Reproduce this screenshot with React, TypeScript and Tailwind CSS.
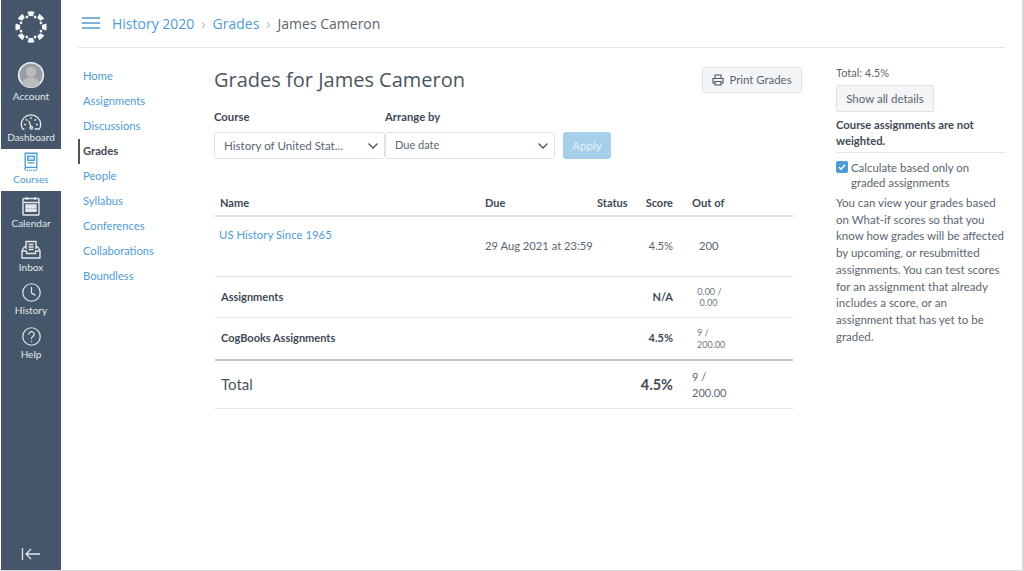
import React from "react";

const Icon = ({ children, w = 24, h = 24 }: { children: React.ReactNode; w?: number; h?: number }) => (
  <svg width={w} height={h} viewBox="0 0 24 24" fill="none" stroke="currentColor" strokeWidth="1.4" strokeLinecap="round" strokeLinejoin="round">
    {children}
  </svg>
);

const Logo = () => {
  const big = [0, 45, 90, 135, 180, 225, 270, 315];
  return (
    <svg width="32" height="32" viewBox="-16 -16 32 32" fill="#f4f5f6">
      {big.map((a) => (
        <g key={a} transform={`rotate(${a})`}>
          <path d="M-3.6 -15.300 Q0 -16 3.600 -15.300 L2 -10.800 Q0 -11.300 -2 -10.800 Z" />
          <circle cx="0" cy="-10.800" r="1.350" transform="rotate(22.5)" />
        </g>
      ))}
    </svg>
  );
};

const Avatar = () => (
  <svg width="28" height="28" viewBox="0 0 28 28">
    <circle cx="14" cy="14" r="12.3" fill="#9a9da1" stroke="#eef0f1" strokeWidth="1.6" />
    <circle cx="14" cy="11" r="5.2" fill="#b9bbbd" />
    <path d="M5 22.500c1.500-4.500 5-6 9-6s7.500 1.500 9 6a12 12 0 0 1-18 0Z" fill="#b9bbbd" />
  </svg>
);

const Gauge = () => (
  <svg width="22" height="16" viewBox="0 0 22 16" fill="none" stroke="currentColor" strokeWidth="1.3" strokeLinecap="round" strokeLinejoin="round">
    <path d="M4 15H2.600A9.500 9.500 0 0 1 1.300 10.500a9.700 9.700 0 0 1 19.400 0 9.500 9.500 0 0 1-1.300 4.500H15" />
    <path d="M9 7.500l2 5.500" />
    <circle cx="11.300" cy="13.800" r="1.300" />
    <path d="M4.500 10.500h1M16.500 10.500h1M11 3.500v1M6.300 5.500l.7.700M15.700 5.500l-.7.700" />
  </svg>
);

const Book = () => (
  <svg width="16" height="20" viewBox="0 0 18 24" fill="none" stroke="currentColor" strokeWidth="1.6">
    <path d="M2 1.500h14v17H3.500A1.500 1.500 0 0 0 2 20Z" />
    <path d="M2 20a1.600 1.600 0 0 0 1.500 2H16v-3.500" strokeDasharray="1.600 1" />
    <rect x="5" y="5" width="8" height="5" fill="currentColor" fillOpacity="0.25" />
    <path d="M5 13h8" />
  </svg>
);

const Calendar = () => (
  <svg width="18" height="20" viewBox="0 0 18 20" fill="none" stroke="currentColor" strokeWidth="1.4">
    <rect x="1" y="2.500" width="16" height="16.500" rx="0.800" />
    <path d="M1 6.500h16M5 1v3M13 1v3" />
    <path d="M4 9h2.400v2.200H4zM7.800 9h2.400v2.200H7.800zM11.600 9H14v2.200h-2.400zM4 13h2.400v2.200H4zM7.800 13h2.400v2.200H7.800zM11.600 13H14v2.200h-2.400z" fill="currentColor" />
  </svg>
);

const Inbox = () => (
  <svg width="20" height="20" viewBox="0 0 20 20" fill="none" stroke="currentColor" strokeWidth="1.4" strokeLinejoin="round">
    <path d="M5 9V1.500h10V9" />
    <path d="M7.500 4.500h5M7.500 7h5M7.500 9.500h5" />
    <path d="M5 7H3.200L1 10.500v7.500h18v-7.500L16.800 7H15" />
    <path d="M1 11h4.500v2.500h9V11H19" />
  </svg>
);

const NavItem = ({ icon, label, className }: { icon: React.ReactNode; label: string; className: string }) => (
  <div className={`flex flex-col items-center justify-end text-[10px] leading-[12px] ${className}`}>
    <div className="flex items-center justify-center">{icon}</div>
    <span className="mt-[1px]">{label}</span>
  </div>
);

const Sidebar = () => (
  <aside className="ml-px flex w-[60px] shrink-0 flex-col bg-[#45566a] text-[#e4e7ea]">
    <div className="flex h-[43px] items-end justify-center">
      <Logo />
    </div>
    <NavItem className="h-[59px]" icon={<Avatar />} label="Account" />
    <NavItem className="h-[41px]" icon={<Gauge />} label="Dashboard" />
    <NavItem className="mt-[6px] h-[42px] bg-white pb-[6px] text-[#4f9bd5]" icon={<Book />} label="Courses" />
    <NavItem className="h-[38px]" icon={<Calendar />} label="Calendar" />
    <NavItem className="h-[44px]" icon={<Inbox />} label="Inbox" />
    <NavItem className="h-[43px]" icon={<Icon w={21} h={21}><circle cx="12" cy="12" r="10" /><path d="M12 6v6.500l4 2.500" /></Icon>} label="History" />
    <NavItem className="h-[44px]" icon={<Icon w={21} h={21}><circle cx="12" cy="12" r="10" /><path d="M9 9.500a3 3 0 1 1 4.500 2.600c-1 .6-1.500 1.200-1.500 2.400" /><path d="M12 17.600v.1" /></Icon>} label="Help" />
    <div className="mt-auto mb-[9px] flex justify-center">
      <svg width="20" height="14" viewBox="0 0 20 14" fill="none" stroke="#e4e7ea" strokeWidth="1.300">
        <path d="M1.500 1v12M19 7H5M10 2 5 7l5 5" />
      </svg>
    </div>
  </aside>
);

const courseLinks = ["Home", "Assignments", "Discussions", "Grades", "People", "Syllabus", "Conferences", "Collaborations", "Boundless"];

const CourseNav = () => (
  <nav className="flex w-[136px] shrink-0 flex-col pt-[16px] text-[11.2px]">
    {courseLinks.map((l) => (
      <div
        key={l}
        className={
          l === "Grades"
            ? "flex h-[25px] items-center border-l-2 border-[#4a5560] pl-[3px] font-bold text-[#3f4a55]"
            : "flex h-[25px] items-center pl-[5px] text-[#4f9bd5]"
        }
      >
        {l}
      </div>
    ))}
  </nav>
);

const Chevron = () => (
  <svg width="12" height="8" viewBox="0 0 12 8" fill="none" stroke="#4a5560" strokeWidth="1.300">
    <path d="M1.500 1.500 6 6l4.500-4.500" />
  </svg>
);

const Select = ({ value, w }: { value: string; w: string }) => (
  <div className={`flex h-[27px] items-center justify-between rounded-[3px] border border-[#dfe2e5] bg-white pr-[5px] pl-[9px] text-[#5b6670] ${w}`}>
    <span>{value}</span>
    <Chevron />
  </div>
);

const cols = "grid grid-cols-[265px_112px_48px_46px_1fr] items-center";

const GradesTable = () => (
  <div className="mt-[30px] ml-px w-[578px] text-[#3f4a55]">
    <div className={`${cols} h-[28px] border-b-2 border-[#dcdfe2] pt-[2px] text-[11px] font-bold`}>
      <span className="pl-[5px]">Name</span>
      <span className="pl-[5px]">Due</span>
      <span className="pl-[5px]">Status</span>
      <span className="pr-[13px] text-right">Score</span>
      <span className="pl-[6px] text-[11.2px]">Out of</span>
    </div>
    <div className={`${cols} h-[60px] border-b border-[#dcdfe2] text-[11.2px] text-[#5b6670]`}>
      <span className="self-start pt-[9px] pl-[4px] text-[11.4px] text-[#4f9bd5]">US History Since 1965</span>
      <span className="pl-[5px] whitespace-nowrap">29 Aug 2021 at 23:59</span>
      <span />
      <span className="pr-[13px] text-right">4.5%</span>
      <span className="pl-[13px]">200</span>
    </div>
    <div className={`${cols} h-[41px] border-b border-[#e3e5e7]`}>
      <span className="pl-[6px] text-[11px] font-bold text-[#3f4a55]">Assignments</span>
      <span />
      <span />
      <span className="pr-[13px] text-right text-[11px] font-bold">N/A</span>
      <span className="pl-[9px] text-[9px] leading-[11.500px] text-[#6d7780]">
        {"\u00a00.00 /"}
        <br />
        {"\u00a0\u00a00.00"}
      </span>
    </div>
    <div className={`${cols} h-[43px] border-b-2 border-[#c4c7ca]`}>
      <span className="pl-[6px] text-[11px] font-bold text-[#3f4a55]">CogBooks Assignments</span>
      <span />
      <span />
      <span className="pr-[13px] text-right text-[11px] font-bold">4.5%</span>
      <span className="pl-[11px] text-[9px] leading-[11.500px] text-[#6d7780]">
        9 /
        <br />
        200.00
      </span>
    </div>
    <div className={`${cols} h-[48px] border-b border-[#e3e5e7]`}>
      <span className="pl-[6px] text-[15px] text-[#4a5560]">Total</span>
      <span />
      <span />
      <span className="pr-[13px] text-right text-[14.500px] font-bold">4.5%</span>
      <span className="pl-[6px] text-[11px] leading-[15.500px] text-[#5b6670]">
        9 /
        <br />
        200.00
      </span>
    </div>
  </div>
);

const Main = () => (
  <section className="w-[588px] shrink-0 pt-[19px]">
    <div className="flex items-start justify-between">
      <h1 className="font-['Open_Sans',sans-serif] text-[20px] leading-[26px] font-normal text-[#4a5560]">Grades for James Cameron</h1>
      <button className="flex h-[26px] w-[100px] items-center justify-center gap-[5px] rounded-[2px] border border-[#dfe2e5] bg-[#f4f5f6] text-[11.400px] text-[#5b6670]">
        <svg width="12" height="12" viewBox="0 0 12 12" fill="none" stroke="#4a5560" strokeWidth="1.100">
          <path d="M3 4V1h6v3M3 9H1V4.500h10V9H9M3 7.500h6V11H3z" />
        </svg>
        Print Grades
      </button>
    </div>
    <div className="mt-[17px] flex items-end">
      <div className="flex w-[171px] flex-col gap-[8px]">
        <label className="text-[11.300px] leading-[14px] font-bold text-[#3f4a55]">Course</label>
        <div className="text-[11.600px]">
          <Select value="History of United Stat..." w="w-[171px]" />
        </div>
      </div>
      <div className="flex flex-col gap-[8px]">
        <label className="text-[11.300px] leading-[14px] font-bold text-[#3f4a55]">Arrange by</label>
        <div className="text-[11px]">
          <Select value="Due date" w="w-[170px]" />
        </div>
      </div>
      <button className="ml-[8px] h-[27px] w-[48px] rounded-[3px] bg-[#a5cfeb] text-[11.500px] text-[#e3f0f9]">Apply</button>
    </div>
    <GradesTable />
  </section>
);

const Side = () => (
  <aside className="ml-[34px] w-[170px] shrink-0 pt-[18px] text-[11.500px] text-[#5b6670]">
    <div className="text-[11px] leading-[14px]">Total: 4.5%</div>
    <button className="mt-[5px] h-[27px] w-[98px] rounded-[2px] border border-[#dfe2e5] bg-[#f4f5f6] text-[#5b6670]">Show all details</button>
    <p className="mt-[5px] border-b border-[#e3e5e7] pb-[3px] text-[11.250px] leading-[16px] font-bold text-[#3f4a55]">Course assignments are not weighted.</p>
    <label className="mt-[7px] flex items-start gap-[3px] text-[11.400px] leading-[15px]">
      <span className="mt-[1px] flex h-[12px] w-[12px] shrink-0 items-center justify-center rounded-[2px] bg-[#4f9bd5]">
        <svg width="8" height="8" viewBox="0 0 8 8" fill="none" stroke="#ffffff" strokeWidth="1.500">
          <path d="M1 4.200 3.200 6.200 7 1.800" />
        </svg>
      </span>
      <span>
        Calculate based only on
        <br />
        graded assignments
      </span>
    </label>
    <p className="mt-[5px] leading-[16.700px]">
      You can view your grades based on What-if scores so that you know how grades will be affected by upcoming, or resubmitted assignments. You can test scores for an assignment that already includes a score, or an assignment that has yet to be graded.
    </p>
  </aside>
);

export default function App() {
  return (
    <div className="flex h-[571px] w-[1024px] overflow-hidden border-r-2 border-b border-[#d8d8d8] bg-white font-['Lato',sans-serif]">
      <Sidebar />
      <div className="ml-[17px] flex w-[927px] flex-col">
        <header className="flex h-[48px] items-center border-b border-[#e3e5e7] pb-[1px] font-['Open_Sans',sans-serif] text-[14px]">
          <svg width="18" height="12" viewBox="0 0 18 12" stroke="#4f9bd5" strokeWidth="1.300" className="ml-[4px]">
            <path d="M0 1h18M0 6h18M0 11h18" />
          </svg>
          <span className="ml-[12px] text-[#4f9bd5]">History 2020</span>
          <span className="mx-[7px] text-[#b5bbc0]">›</span>
          <span className="text-[#4f9bd5]">Grades</span>
          <span className="mx-[7px] text-[#b5bbc0]">›</span>
          <span className="text-[#5b6670]">James Cameron</span>
        </header>
        <div className="flex">
          <CourseNav />
          <Main />
          <Side />
        </div>
      </div>
    </div>
  );
}
